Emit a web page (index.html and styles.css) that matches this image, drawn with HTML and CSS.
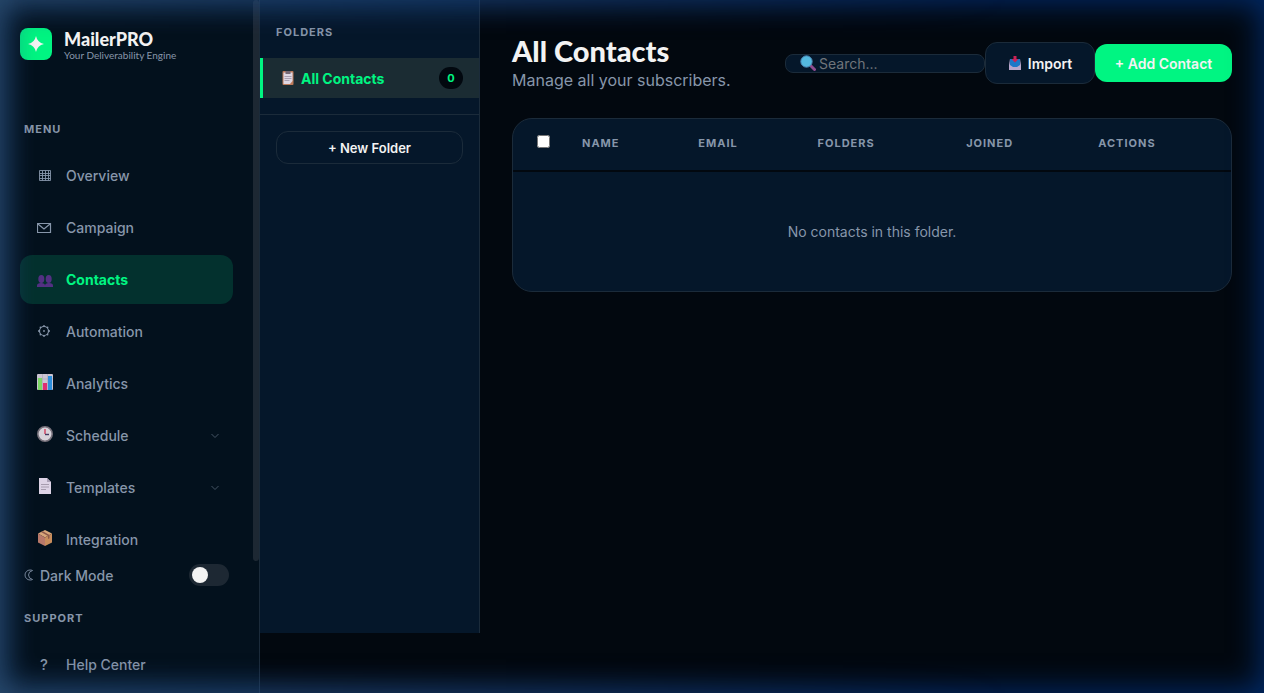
FILE: index.html
```html
<!DOCTYPE html>
<html lang="en">
<head>
  <meta charset="UTF-8">
  <meta name="viewport" content="width=device-width, initial-scale=1">
  <title>MailerPRO - Contacts</title>
  <link rel="stylesheet" href="styles.css">
</head>
<body>
  <div class="app">
    <!-- Sidebar -->
    <aside class="sidebar">
      <div class="sidebar-body">
        <div class="brand">
          <div class="brand-icon">
            <svg width="16" height="16" viewBox="0 0 16 16"><path d="M8 0Q9.400 6.600 16 8Q9.400 9.400 8 16Q6.600 9.400 0 8Q6.600 6.600 8 0Z" fill="#f3f3f3"/></svg>
          </div>
          <div>
            <div class="brand-name">MailerPRO</div>
            <div class="brand-tag">Your Deliverability Engine</div>
          </div>
        </div>

        <div class="nav-label">Menu</div>
        <nav class="nav">
          <a href="#" class="nav-item">
            <svg class="icon" viewBox="0 0 16 16" fill="none" stroke="currentColor"><path d="M2.500 2.500h11v10h-11zM5.500 2.500v10M8.500 2.500v10M11.500 2.500v10M2.500 5.500h11M2.500 7.500h11M2.500 10.500h11" stroke-width=".9"/></svg>
            Overview
          </a>
          <a href="#" class="nav-item">
            <svg class="icon" viewBox="0 0 16 16" fill="none" stroke="currentColor"><path d="M.5 3.500h13v9H.5zM1 4l6 5 6-5" stroke-width="1.200"/></svg>
            Campaign
          </a>
          <a href="#" class="nav-item active">
            <svg class="icon" viewBox="0 0 16 16" fill="#533083"><ellipse cx="4.300" cy="7" rx="3" ry="4"/><ellipse cx="11.700" cy="7" rx="3" ry="4"/><path d="M0 15v-1.500q0-2.500 4-2.500t4 2.500V15zM8 15v-1.500q0-2.500 4-2.500t4 2.500V15z"/></svg>
            Contacts
          </a>
          <a href="#" class="nav-item">
            <svg class="icon" viewBox="0 0 16 16" fill="none" stroke="currentColor"><circle cx="7" cy="7" r="4.500" stroke-width="1.200"/><circle cx="7" cy="7" r=".6"/><path d="M7 1v2M7 11v2M1 7h2M11 7h2M2.800 2.800l1.300 1.300M9.900 9.900l1.300 1.300M2.800 11.200l1.300-1.300M9.900 4.100l1.300-1.300" stroke-width="1.300"/></svg>
            Automation
          </a>
          <a href="#" class="nav-item">
            <svg class="icon raised" viewBox="0 0 16 16"><rect width="16" height="16" rx="1" fill="#cbc5d3"/><path d="M5.500 0v16M10.500 0v16M0 5h16" stroke="#aaa3b5" stroke-width=".6"/><rect x="1" y="4" width="4" height="12" fill="#7cd765"/><rect x="6" y="9" width="4" height="7" fill="#de2f72"/><rect x="11" y="2" width="4" height="14" fill="#2d8fdc"/></svg>
            Analytics
          </a>
          <a href="#" class="nav-item">
            <svg class="icon raised" viewBox="0 0 16 16"><circle cx="8" cy="8" r="7.200" fill="#d8d3da" stroke="#77717b" stroke-width="1.600"/><path d="M8 3v5" stroke="#d33e5d" stroke-width="1.400"/><path d="M8 8.500h4" stroke="#443b62" stroke-width="1.400"/></svg>
            Schedule
            <svg class="chevron" viewBox="0 0 8 6" fill="none" stroke="currentColor"><path d="M.5 1l3.500 3.500L7.500 1"/></svg>
          </a>
          <a href="#" class="nav-item">
            <svg class="icon raised" viewBox="0 0 16 16"><path d="M2 0h8l4 4v12H2z" fill="#ddd3e6"/><path d="M10 0v4h4z" fill="#aaa0b6"/><path d="M4 6.500h8M4 9h8M4 11.500h5" stroke="#a69caf"/></svg>
            Templates
            <svg class="chevron" viewBox="0 0 8 6" fill="none" stroke="currentColor"><path d="M.5 1l3.500 3.500L7.500 1"/></svg>
          </a>
          <a href="#" class="nav-item">
            <svg class="icon raised" viewBox="0 0 16 16"><path d="M8 0l7 3.500L8 7.500l-7-4z" fill="#d9a77b"/><path d="M1 3.500l7 4V16l-7-3.500z" fill="#b9796a"/><path d="M15 3.500l-7 4V16l7-3.500z" fill="#c98d5c"/><path d="M4 2l7 4v3l1.500-.8V5L5.800 1.200z" fill="#8d5a4b"/></svg>
            Integration
          </a>
        </nav>

        <!-- Theme + support -->
        <label class="theme-row" for="darkMode">
          <svg class="moon" viewBox="0 0 10 12" fill="none" stroke="currentColor"><path d="M8.500 1.500Q7.500 1 6 1A5 5 0 0 0 6 11Q7.500 11 8.500 10.500Q4.500 9.500 4.500 6T8.500 1.500Z" stroke-width=".9"/></svg>
          Dark Mode
          <input type="checkbox" id="darkMode" class="toggle">
        </label>
        <div class="nav-label support">Support</div>
        <a href="#" class="nav-item"><span class="icon question">?</span>Help Center</a>
      </div>
      <div class="scroll-track"><div class="scroll-thumb"></div></div>
    </aside>

    <!-- Folders -->
    <section class="folders">
      <h2 class="folders-title">Folders</h2>
      <a href="#" class="folder active">
        <svg class="icon-sm" viewBox="0 0 14 14"><rect x="1.500" y="0" width="11" height="14" rx="1" fill="#bd7958"/><path d="M2.500 1.500h9v8.500l-2.500 3H2.500z" fill="#ded7e3"/><path d="M4.500 0h5v3h-5z" fill="#756875"/><path d="M3.500 5.500h7M3.500 7.500h7M3.500 9.500h5" stroke="#9c90a5" stroke-width=".8"/></svg>
        All Contacts
        <span class="count">0</span>
      </a>
      <div class="folders-actions">
        <button type="button" class="btn-folder">+ New Folder</button>
      </div>
    </section>

    <!-- Contacts -->
    <main class="main">
      <header class="page-header">
        <div>
          <h1>All Contacts</h1>
          <p>Manage all your subscribers.</p>
        </div>
        <div class="toolbar">
          <label class="search">
            <svg class="icon" viewBox="0 0 16 16"><path d="M10.500 10.500l4 4" stroke="#8d4b8e" stroke-width="3" stroke-linecap="round"/><circle cx="6.500" cy="6.500" r="5.700" fill="#54b9df" stroke="#487eac"/></svg>
            <input type="text" placeholder="Search..." aria-label="Search contacts">
          </label>
          <button type="button" class="btn btn-import">
            <svg class="icon-sm" viewBox="0 0 14 14"><path d="M2 3h10l1 6v5H1V9z" fill="#b9a7cc"/><path d="M2 3h10v6l-3 2H5L2 9z" fill="#1d78c8"/><path d="M5.500 0h3v3h2L7 6.500 3.500 3h2z" fill="#c92257"/></svg>
            Import
          </button>
          <button type="button" class="btn btn-add">+ Add Contact</button>
        </div>
      </header>

      <div class="table-card">
        <table>
          <thead>
            <tr>
              <th class="col-check"><input type="checkbox" aria-label="Select all"></th>
              <th class="col-name">Name</th>
              <th class="col-email">Email</th>
              <th class="col-folders">Folders</th>
              <th class="col-joined">Joined</th>
              <th>Actions</th>
            </tr>
          </thead>
          <tbody>
            <tr>
              <td colspan="6" class="empty">No contacts in this folder.</td>
            </tr>
          </tbody>
        </table>
      </div>
    </main>
  </div>
  <div class="glow"></div>
</body>
</html>
```

FILE: styles.css
```css
:root {
  --bg: #02080f;
  --sidebar: #03111d;
  --panel: #05172a;
  --border: #1b2b3a;
  --green: #00f582;
  --text: #f3f3f3;
  --muted: #8796aa;
}
* {
  box-sizing: border-box;
}
body {
  margin: 0;
  font-family: Inter, "Liberation Sans", sans-serif;
  font-size: 14px;
  background: var(--bg);
  color: var(--text);
}
a {
  color: inherit;
  text-decoration: none;
}
button, input {
  font-family: inherit;
}
.app {
  display: flex;
  height: 100vh;
}

/* Sidebar */
.sidebar {
  display: flex;
  width: 260px;
  flex-shrink: 0;
  background: var(--sidebar);
  border-right: 1px solid var(--border);
}
.sidebar-body {
  flex: 1;
  padding: 28px 20px 0;
  overflow-y: auto;
  scrollbar-width: none;
}
.scroll-track {
  width: 6px;
}
.scroll-thumb {
  height: 81%;
  border-radius: 3px;
  background: #1d2833;
}
.brand {
  display: flex;
  gap: 12px;
  height: 32px;
  margin-bottom: 60px;
}
.brand-icon {
  display: flex;
  align-items: center;
  justify-content: center;
  width: 32px;
  height: 32px;
  border-radius: 8px;
  background: var(--green);
}
.brand-name {
  font-family: Lato, sans-serif;
  font-size: 18px;
  font-weight: 900;
  line-height: 22px;
}
.brand-tag {
  font-family: Lato, sans-serif;
  font-size: 10px;
  line-height: 10px;
  color: var(--muted);
}
.nav-label {
  padding-left: 4px;
  margin-bottom: 13px;
  font-size: 11px;
  font-weight: 700;
  line-height: 18px;
  letter-spacing: 1px;
  text-transform: uppercase;
  color: var(--muted);
}
.nav {
  display: flex;
  flex-direction: column;
  gap: 3px;
}
.nav-item {
  display: flex;
  align-items: center;
  gap: 13px;
  height: 49px;
  padding: 0 14px 0 17px;
  border-radius: 12px;
  font-weight: 500;
  color: var(--muted);
}
.nav-item.active {
  background: #03312e;
  color: var(--green);
  font-weight: 700;
}
.icon {
  width: 16px;
  height: 16px;
  flex-shrink: 0;
}
.icon.raised {
  margin-bottom: 3px;
}
.icon-sm {
  width: 14px;
  height: 14px;
  flex-shrink: 0;
}
.chevron {
  width: 8px;
  height: 6px;
  margin-left: auto;
  opacity: 0.5;
}
.question {
  padding-left: 3px;
  font-size: 15px;
  line-height: 16px;
}
.theme-row {
  display: flex;
  align-items: center;
  gap: 6px;
  height: 22px;
  padding: 0 4px;
  color: var(--muted);
  font-weight: 500;
}
.moon {
  width: 10px;
  height: 12px;
}
.toggle {
  appearance: none;
  width: 40px;
  height: 22px;
  margin: 0 0 0 auto;
  padding: 3px;
  border-radius: 11px;
  background: #1d2833;
}
.toggle::before {
  content: "";
  display: block;
  width: 16px;
  height: 16px;
  border-radius: 50%;
  background: var(--text);
}
.toggle:checked::before {
  margin-left: auto;
}
.support {
  margin-top: 23px;
}

/* Folders */
.folders {
  width: 220px;
  height: calc(100vh - 60px);
  flex-shrink: 0;
  background: var(--panel);
  border-right: 1px solid var(--border);
}
.folders-title {
  margin: 0;
  padding: 23px 16px 17px;
  font-size: 11px;
  font-weight: 700;
  line-height: 18px;
  letter-spacing: 1px;
  text-transform: uppercase;
  color: var(--muted);
}
.folder {
  display: flex;
  align-items: center;
  gap: 6px;
  height: 40px;
  padding: 0 16px 0 18px;
  border-left: 3px solid transparent;
  font-size: 14px;
  font-weight: 700;
}
.folder.active {
  border-left-color: var(--green);
  background: #1b2c33;
  color: var(--green);
}
.count {
  margin-left: auto;
  width: 24px;
  border-radius: 11px;
  background: var(--bg);
  font-size: 11px;
  line-height: 22px;
  text-align: center;
}
.folders-actions {
  margin-top: 16px;
  padding: 16px;
  border-top: 1px solid var(--border);
}
.btn-folder {
  width: 100%;
  height: 33px;
  border: 1px solid var(--border);
  border-radius: 12px;
  background: transparent;
  color: var(--text);
  font-size: 13px;
  font-weight: 600;
}

/* Main */
.main {
  flex: 1;
  min-width: 0;
  padding: 32px;
}
.page-header {
  display: flex;
  align-items: center;
  justify-content: space-between;
  height: 62px;
  margin-bottom: 24px;
}
h1 {
  margin: 0;
  font-family: Lato, sans-serif;
  font-size: 29px;
  font-weight: 900;
  line-height: 34px;
}
.page-header p {
  margin: 0;
  font-size: 16px;
  line-height: 24px;
  color: var(--muted);
}
.toolbar {
  display: flex;
  align-items: center;
}
.search {
  display: flex;
  align-items: center;
  gap: 3px;
  width: 200px;
  padding: 0 14px;
  border: 1px solid var(--border);
  border-radius: 8px;
  background: var(--panel);
}
.search input {
  width: 100%;
  height: 17px;
  padding: 0;
  border: 0;
  outline: 0;
  background: transparent;
  color: var(--text);
  font-size: 14px;
}
.search input::placeholder {
  color: #70757a;
}
.btn {
  display: flex;
  align-items: center;
  justify-content: center;
  gap: 6px;
  border: 0;
  border-radius: 12px;
  color: var(--text);
  font-size: 14px;
  font-weight: 600;
}
.btn-import {
  width: 110px;
  height: 42px;
  border: 1px solid var(--border);
  background: var(--panel);
}
.btn-add {
  width: 137px;
  height: 38px;
  background: var(--green);
}

/* Table */
.table-card {
  border: 1px solid var(--border);
  border-radius: 20px;
  background: var(--panel);
  overflow: hidden;
}
table {
  width: 100%;
  table-layout: fixed;
  border-collapse: collapse;
}
th {
  height: 52px;
  padding: 0 0 3px 24px;
  border-bottom: 2px solid var(--bg);
  font-size: 11px;
  font-weight: 700;
  letter-spacing: 1px;
  text-align: left;
  text-transform: uppercase;
  color: var(--muted);
}
th input {
  display: block;
  width: 13px;
  height: 13px;
  margin: 0 0 3px;
}
.col-check {
  width: 45px;
}
.col-name {
  width: 16.2%;
}
.col-email {
  width: 16.6%;
}
.col-folders {
  width: 20.7%;
}
.col-joined {
  width: 18.4%;
}
.empty {
  height: 120px;
  padding: 0;
  text-align: center;
  color: var(--muted);
}

/* Blue light round the window edge */
.glow, .glow::before {
  position: fixed;
  inset: 0;
  pointer-events: none;
}
.glow {
  box-shadow: inset 0 0 30px 4px rgba(0, 56, 140, 0.7);
}
.glow::before {
  content: "";
  box-shadow: inset 0 0 30px 4px rgba(85, 110, 115, 0.5);
  mask-image: linear-gradient(to right, #000, transparent 80%);
}
```
